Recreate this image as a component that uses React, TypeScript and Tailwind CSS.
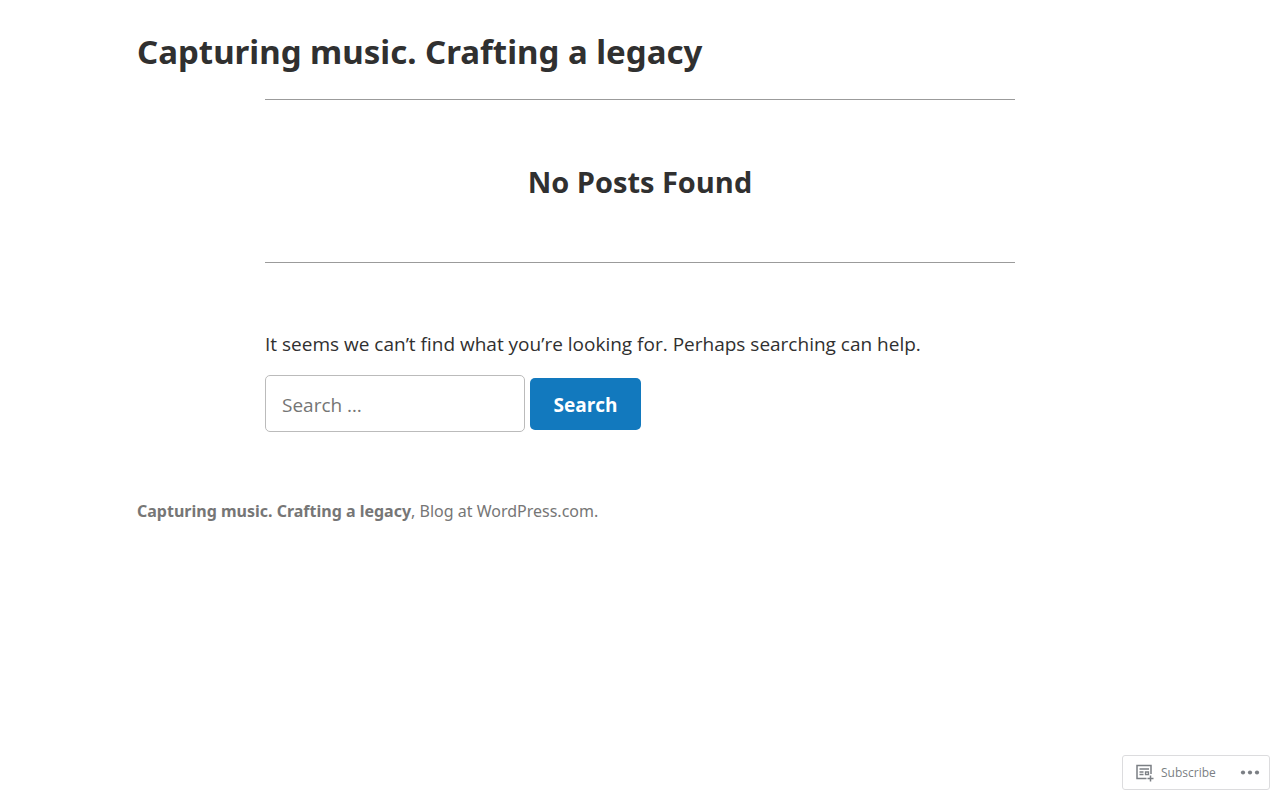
export default function App() {
  return (
    <div className="min-h-screen bg-white font-['Open_Sans','Noto_Sans',sans-serif] text-[#303030]">
      <header className="mx-auto w-full max-w-[1006px] pt-7 font-['Noto_Sans',sans-serif]">
        <h1 className="text-[33px] leading-[47px] font-bold">
          <a href="#">Capturing music. Crafting a legacy</a>
        </h1>
      </header>
      <main className="mx-auto mt-6 w-full max-w-[750px]">
        <h2 className="border-y border-[#9b9b9b] pt-16 pb-[62px] text-center text-[29px] leading-9 font-bold">No Posts Found</h2>
        <p className="mt-16 text-[19px] leading-[34px]">
          It seems we can’t find what you’re looking for. Perhaps searching can help.
        </p>
        <form className="mt-[14px] flex items-center gap-[5px]" onSubmit={(e) => e.preventDefault()}>
          <input
            type="search"
            aria-label="Search for"
            placeholder="Search …"
            className="h-[57px] w-[260px] rounded-[5px] border border-[#bbb] px-4 pt-[2px] text-[19px] placeholder:text-[#757575]"
          />
          <button type="submit" className="h-[52px] w-[111px] rounded-[5px] bg-[#1279be] pt-1 text-[19px] font-bold text-white">
            Search
          </button>
        </form>
      </main>
      <footer className="mx-auto mt-16 w-full max-w-[1006px] font-['Noto_Sans',sans-serif] text-base leading-[30px] text-[#767676]">
        <a href="#" className="font-bold">Capturing music. Crafting a legacy</a>, <a href="#">Blog at WordPress.com.</a>
      </footer>
      <aside className="fixed right-[10px] bottom-[10px] flex h-[35px] w-[148px] items-center justify-between rounded-[3px] border border-[#dcdcde] bg-white pr-[9px] pl-[13px] text-[#7b7f84]">
        <a href="#" className="flex items-center gap-[7px] text-xs leading-4">
          <svg width="18" height="18" viewBox="0 0 18 18" fill="none" stroke="currentColor">
            <path strokeWidth="1.5" d="M10.500 14.500H1V1.500h14v8.500" />
            <path strokeWidth="1.300" d="M3.500 5h9.500M3.500 8h4M3.500 10.500h4M9.500 8h3v2.500h-3z" />
            <path strokeWidth="1.500" d="M14.500 11.500v6M11.500 14.500h6" />
          </svg>
          Subscribe
        </a>
        <button type="button" aria-label="More options">
          <svg width="20" height="6" viewBox="0 0 20 6" fill="currentColor">
            <circle cx="3" cy="2.500" r="2.100" />
            <circle cx="10" cy="2.500" r="2.100" />
            <circle cx="17" cy="2.500" r="2.100" />
          </svg>
        </button>
      </aside>
    </div>
  );
}
